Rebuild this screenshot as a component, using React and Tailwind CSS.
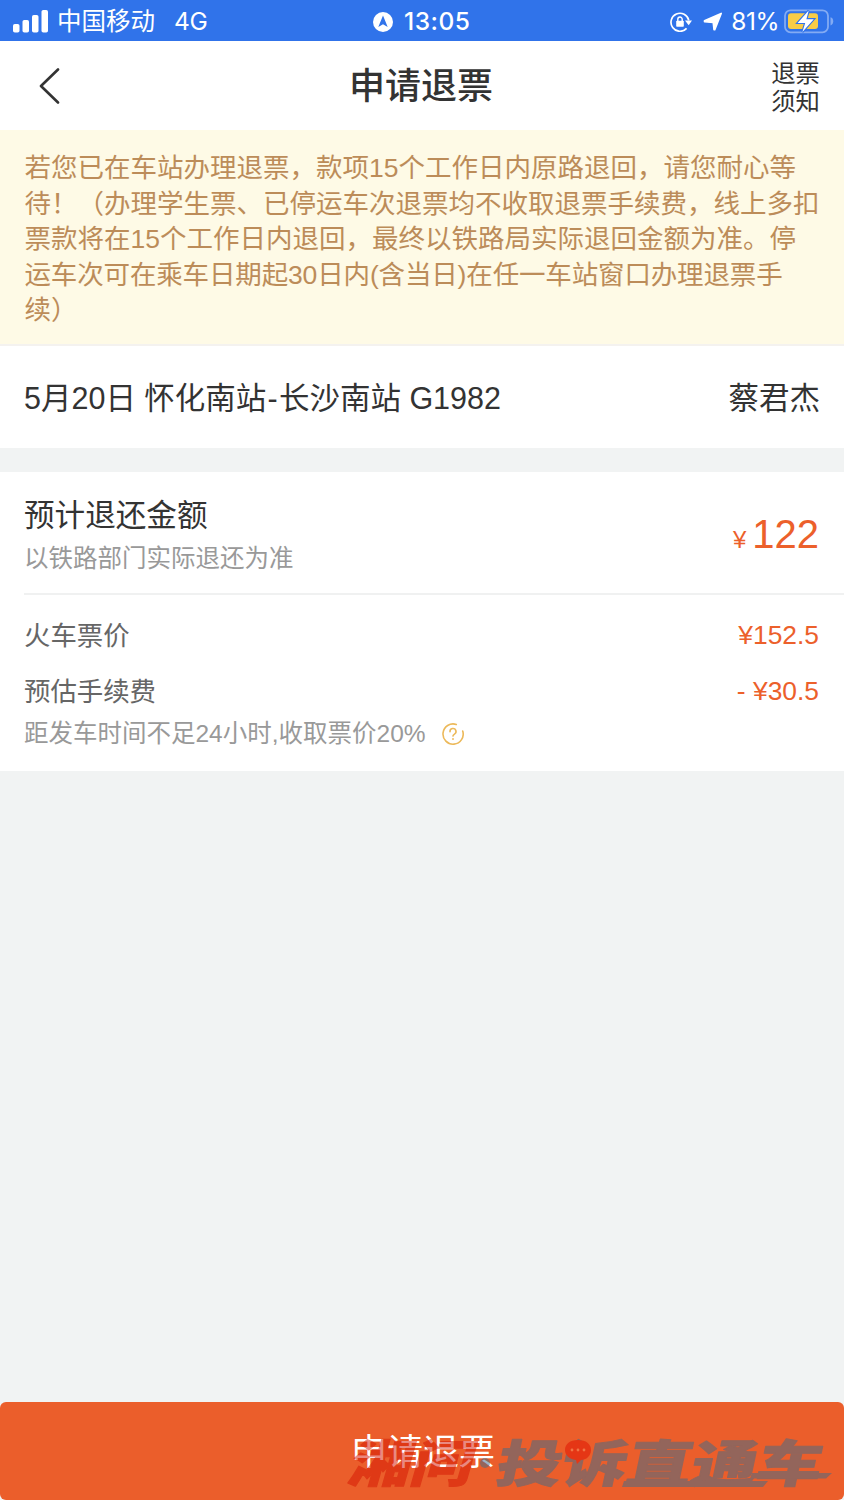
import React from 'react';

const NOTICE_LINES = [
  { text: '若您已在车站办理退票，款项15个工作日内原路退回，请您耐心等' },
  { text: '待！（办理学生票、已停运车次退票均不收取退票手续费，线上多扣' },
  { text: '票款将在15个工作日内退回，最终以铁路局实际退回金额为准。停' },
  { text: '运车次可在乘车日期起30日内(含当日)在任一车站窗口办理退票手', tight: true },
  { text: '续）' },
];

const SignalIcon = () => (
  <svg width="36" height="23" viewBox="0 0 36 23" fill="#fff">
    <rect x="0" y="14" width="6.5" height="8.5" rx="1.8" />
    <rect x="9.5" y="10" width="6.5" height="12.5" rx="1.8" />
    <rect x="19" y="5" width="6.5" height="17.5" rx="1.8" />
    <rect x="28.5" y="0" width="6.5" height="22.5" rx="1.8" />
  </svg>
);

const NavBadge = () => (
  <svg width="20" height="20" viewBox="0 0 20 20">
    <circle cx="10" cy="10" r="10" fill="#fff" />
    <path d="M10 3.6 L14.7 15 L10 12.2 L5.3 15 Z" fill="#3073ea" />
  </svg>
);

const RotationLock = () => (
  <svg width="22" height="20" viewBox="0 0 22 20" fill="none" stroke="#fff">
    <path d="M18.8 8.4 A9 9 0 1 0 16.6 16.4" strokeWidth="1.7" />
    <path d="M15 8.6 L22 8.6 L18.7 13.2 Z" fill="#fff" stroke="none" />
    <rect x="6.2" y="8.7" width="7.6" height="6" rx="0.8" fill="#fff" stroke="none" />
    <path d="M7.8 9 V7.2 a2.2 2.2 0 0 1 4.4 0 V9" strokeWidth="1.4" />
  </svg>
);

const LocationArrow = () => (
  <svg className="block" width="20" height="20" viewBox="0 0 20 20" fill="#fff" stroke="#fff" strokeWidth="1.6" strokeLinejoin="round">
    <path d="M18.2 1.4 L11.8 17.6 L11 17.6 L10.2 10.4 L1.5 9.8 V8.8 Z" />
  </svg>
);

const BatteryIcon = () => (
  <svg width="50" height="25" viewBox="0 0 50 25">
    <rect x="1" y="1.3" width="43" height="22" rx="5.5" fill="none" stroke="#83abf3" strokeWidth="1.8" />
    <path d="M46.5 8.3 Q49.2 9 49.2 12.3 Q49.2 15.6 46.5 16.4 Z" fill="#83abf3" />
    <rect x="4" y="4.3" width="30" height="15.6" rx="3" fill="#f8cc46" />
    <path d="M24.7 1.6 L13.6 14 H21.2 L18.4 23 L29.8 10.2 H22.4 Z" fill="#fff" stroke="#3073ea" strokeWidth="2.2" paintOrder="stroke" />
  </svg>
);

const HelpIcon = () => (
  <svg className="block" width="22" height="22" viewBox="0 0 22 22" fill="none" stroke="#ecb95a" strokeWidth="1.6" strokeLinecap="round">
    <path d="M14.3 1.5 A10.1 10.1 0 1 0 20.7 8" />
    <path d="M8 8.7 A3 3 0 1 1 12.5 11.1 Q11 12 11 13.1" />
    <path d="M11 15.9 V16" strokeWidth="1.9" />
  </svg>
);

// Site mark laid over the bottom button
const Watermark = () => (
  <svg
    className="absolute right-0 bottom-0 opacity-50 pointer-events-none"
    width="504"
    height="98"
    viewBox="340 1402 504 98"
    fontFamily="'Noto Sans CJK SC', sans-serif"
    fontWeight="900"
    fontSize="50"
    strokeLinejoin="round"
  >
    <g fill="#d51603" stroke="#d51603" strokeWidth="1">
      <text transform="translate(346 1482) skewX(-16) scale(1.24 1)" x="0" y="0">湘问</text>
    </g>
    <circle cx="485" cy="1463" r="5" fill="#3d6c8b" />
    <g fill="#3d6c8b">
      <text transform="translate(494 1482) skewX(-12) scale(1.3 1)" stroke="#3d6c8b" strokeWidth="1" x="0" y="0">投诉直通车</text>
      <path d="M624 1481 H768 L763 1487 H622 Z" />
      <path d="M752 1473 H832 L826 1478.5 H750 Z" />
    </g>
    <path d="M578 1440 c8 0 13 4 13 10 c0 6 -5 10 -10 10 l-4 4 l-1 -4 c-7 -1 -11 -5 -11 -10 c0 -6 5 -10 13 -10 Z" fill="#e00f00" />
    <g fill="#f58b60">
      <circle cx="572" cy="1450" r="1.4" />
      <circle cx="578" cy="1450" r="1.4" />
      <circle cx="584" cy="1450" r="1.4" />
    </g>
  </svg>
);

const StatusBar = () => (
  <div className="h-[41px] bg-[#3073ea] text-white text-[24.5px] leading-[43px] grid grid-cols-[373px_1fr_auto]">
    <div className="flex items-center pl-[13px]">
      <SignalIcon />
      <span className="ml-[8px]">中国移动</span>
      <span className="ml-[19px] font-['Inter'] tracking-[-0.4px]">4G</span>
    </div>
    <div className="flex items-center">
      <NavBadge />
      <span className="ml-[11px] font-['Inter'] font-medium tracking-[0.5px]">13:05</span>
    </div>
    <div className="flex items-center pr-[10px]">
      <RotationLock />
      <span className="ml-[11px]"><LocationArrow /></span>
      <span className="ml-[8px] mr-[5px] font-['Inter'] tracking-[-0.5px]">81%</span>
      <BatteryIcon />
    </div>
  </div>
);

const App = () => {
  return (
    <div className="w-[844px] h-[1500px] flex flex-col overflow-hidden bg-[#f1f3f3] text-[#333] whitespace-nowrap font-['Liberation_Sans','Noto_Sans_CJK_SC',sans-serif]">
      <StatusBar />

      {/* Header */}
      <header className="h-[89px] bg-white grid grid-cols-[1fr_auto_1fr] items-center px-[24px]">
        <svg className="ml-[14px]" width="24" height="36" viewBox="0 0 24 36" fill="none" stroke="#333" strokeWidth="2.6" strokeLinecap="round" strokeLinejoin="round">
          <path d="M20 1.5 L3 18 L20 34.5" />
        </svg>
        <h1 className="text-[36px] leading-[44px] font-medium pt-[3px] pr-[2px]">申请退票</h1>
        <div className="justify-self-end text-[24.4px] leading-[28px] pt-[4px]">
          <div>退票</div>
          <div>须知</div>
        </div>
      </header>

      {/* Notice */}
      <div className="h-[216px] bg-[#fefae6] border-b-2 border-[#f4f2ef] text-[#bc8c59] text-[26.5px] leading-[35.6px] pl-[24.5px] pt-[21px]">
        {NOTICE_LINES.map((line) => (
          <p key={line.text} className={line.tight ? 'tracking-[-0.15px]' : ''}>{line.text}</p>
        ))}
      </div>

      {/* Trip */}
      <div className="h-[102px] bg-white flex items-center justify-between px-[24px] pt-[3px] text-[30.5px]">
        <span>5月20日 怀化南站<span className="px-[1.2px]">-</span>长沙南站 G1982</span>
        <span>蔡君杰</span>
      </div>

      {/* Refund details */}
      <section className="mt-[24px] h-[299px] bg-white pl-[24px]">
        <div className="h-[123px] border-b-2 border-[#f0f1f1] pr-[25px] flex items-center justify-between">
          <div className="pt-[8px]">
            <div className="text-[30.6px] leading-[44px]">预计退还金额</div>
            <div className="text-[24.5px] leading-[44px] text-[#999]">以铁路部门实际退还为准</div>
          </div>
          <div className="text-[#ec602b] flex items-baseline gap-[6px] pt-[3px]">
            <span className="text-[24px]">¥</span>
            <span className="text-[40px]">122</span>
          </div>
        </div>
        <div className="pr-[25px] pt-[13px] text-[26.4px] text-[#666]">
          <div className="h-[56px] flex items-center justify-between">
            <span className="pt-[2px]">火车票价</span>
            <span className="text-[#ec602b]">¥152.5</span>
          </div>
          <div className="h-[56px] flex items-center justify-between">
            <span className="pt-[2px]">预估手续费</span>
            <span className="text-[#ec602b]">- ¥30.5</span>
          </div>
          <div className="h-[28px] flex items-center text-[24.5px] text-[#999]">
            <span>距发车时间不足24小时,收取票价20%</span>
            <span className="ml-[16px]"><HelpIcon /></span>
          </div>
        </div>
      </section>

      <div className="relative mt-auto">
        <button className="block w-full h-[98px] rounded-[6px] bg-[#eb5e2b] text-white text-[36px] pl-[2px] pt-[3px]">
          申请退票
        </button>
        <Watermark />
      </div>
    </div>
  );
};

export default App;
